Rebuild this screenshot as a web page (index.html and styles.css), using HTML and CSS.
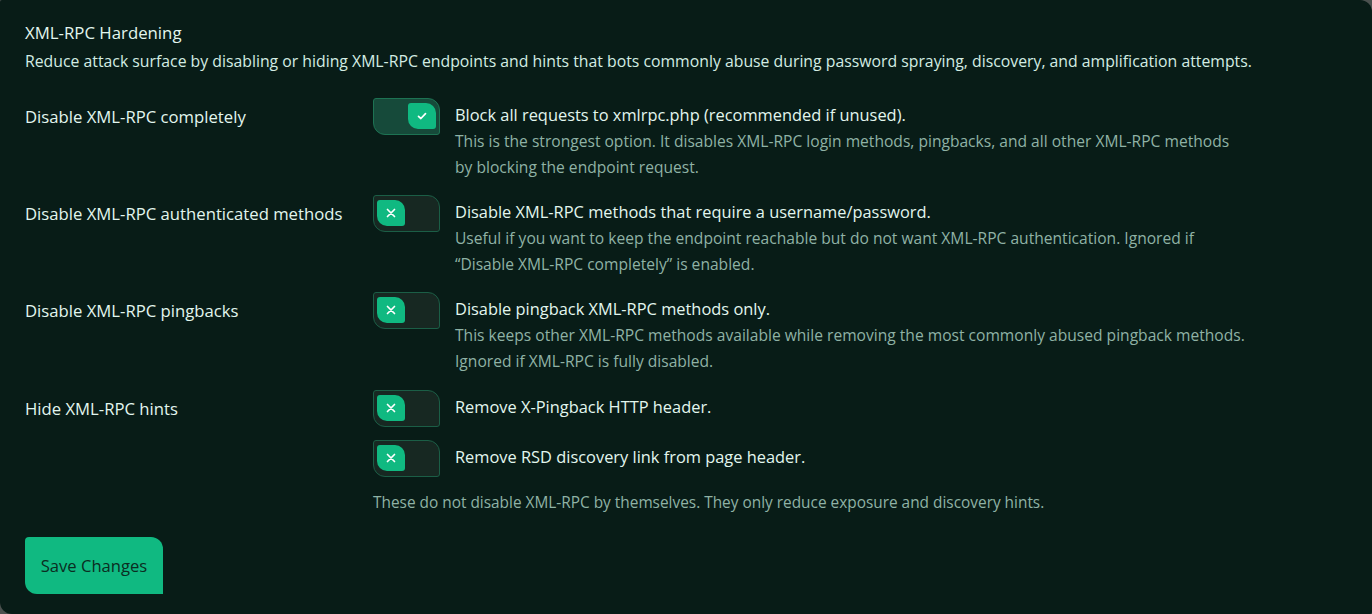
FILE: index.html
```html
<!DOCTYPE html>
<html lang="en">
<head>
<meta charset="utf-8">
<title>XML-RPC Hardening</title>
<link rel="stylesheet" href="styles.css">
</head>
<body>
<main class="panel">
  <header class="section-head">
    <h2 class="section-title">XML-RPC Hardening</h2>
    <p class="section-sub">Reduce attack surface by disabling or hiding XML-RPC endpoints and hints that bots commonly abuse during password spraying, discovery, and amplification attempts.</p>
  </header>

  <div class="rows">
    <div class="row">
      <div class="label">Disable XML-RPC completely</div>
      <div class="control">
        <div class="option">
          <span class="toggle on"><span class="knob"><svg viewBox="0 0 12 12" width="12" height="12"><path d="M2.5 6.3 L4.9 8.5 L9.5 3.6" fill="none" stroke="#fff" stroke-width="1.7" stroke-linecap="round" stroke-linejoin="round"/></svg></span></span>
          <div class="opt-text">
            <div class="opt-title">Block all requests to xmlrpc.php (recommended if unused).</div>
            <div class="opt-desc">This is the strongest option. It disables XML-RPC login methods, pingbacks, and all other XML-RPC methods by blocking the endpoint request.</div>
          </div>
        </div>
      </div>
    </div>

    <div class="row">
      <div class="label">Disable XML-RPC authenticated methods</div>
      <div class="control">
        <div class="option">
          <span class="toggle"><span class="knob"><svg viewBox="0 0 12 12" width="12" height="12"><path d="M2.5 2.5 L9.5 9.5 M9.5 2.5 L2.5 9.5" fill="none" stroke="#fff" stroke-width="1.7" stroke-linecap="round"/></svg></span></span>
          <div class="opt-text">
            <div class="opt-title">Disable XML-RPC methods that require a username/password.</div>
            <div class="opt-desc">Useful if you want to keep the endpoint reachable but do not want XML-RPC authentication. Ignored if “Disable XML-RPC completely” is enabled.</div>
          </div>
        </div>
      </div>
    </div>

    <div class="row">
      <div class="label">Disable XML-RPC pingbacks</div>
      <div class="control">
        <div class="option">
          <span class="toggle"><span class="knob"><svg viewBox="0 0 12 12" width="12" height="12"><path d="M2.5 2.5 L9.5 9.5 M9.5 2.5 L2.5 9.5" fill="none" stroke="#fff" stroke-width="1.7" stroke-linecap="round"/></svg></span></span>
          <div class="opt-text">
            <div class="opt-title">Disable pingback XML-RPC methods only.</div>
            <div class="opt-desc">This keeps other XML-RPC methods available while removing the most commonly abused pingback methods. Ignored if XML-RPC is fully disabled.</div>
          </div>
        </div>
      </div>
    </div>

    <div class="row">
      <div class="label">Hide XML-RPC hints</div>
      <div class="control group">
        <div class="option">
          <span class="toggle"><span class="knob"><svg viewBox="0 0 12 12" width="12" height="12"><path d="M2.5 2.5 L9.5 9.5 M9.5 2.5 L2.5 9.5" fill="none" stroke="#fff" stroke-width="1.7" stroke-linecap="round"/></svg></span></span>
          <div class="opt-text">
            <div class="opt-title">Remove X-Pingback HTTP header.</div>
          </div>
        </div>
        <div class="option">
          <span class="toggle"><span class="knob"><svg viewBox="0 0 12 12" width="12" height="12"><path d="M2.5 2.5 L9.5 9.5 M9.5 2.5 L2.5 9.5" fill="none" stroke="#fff" stroke-width="1.7" stroke-linecap="round"/></svg></span></span>
          <div class="opt-text">
            <div class="opt-title">Remove RSD discovery link from page header.</div>
          </div>
        </div>
        <p class="note">These do not disable XML-RPC by themselves. They only reduce exposure and discovery hints.</p>
      </div>
    </div>
  </div>

  <div class="actions">
    <button class="btn-save" type="button">Save Changes</button>
  </div>
</main>
</body>
</html>
```

FILE: styles.css
```css
html {
  background: #4b514f;
}
body {
  margin: 0;
  font-family: "Open Sans", "Noto Sans", "Liberation Sans", sans-serif;
}
.panel {
  box-sizing: border-box;
  height: 614px;
  background: #081c17;
  border-radius: 2px 12px 2px 12px;
  padding: 20px 25px 0 25px;
  color: #e2f6ee;
}
.section-head {
  margin: 0;
}
.section-title {
  margin: 0;
  font-size: 16.8px;
  font-weight: 400;
  line-height: 26px;
  color: #e2f6ee;
}
.section-sub {
  margin: 2px 0 0 0;
  font-size: 15.8px;
  line-height: 26px;
  color: #d3ece3;
}
.rows {
  display: flex;
  flex-direction: column;
  gap: 15px;
  margin-top: 24px;
}
.row {
  display: flex;
}
.row:last-child {
  margin-top: 1px;
}
.label {
  width: 348px;
  flex: none;
  font-size: 16.7px;
  line-height: 37px;
  color: #e2f6ee;
}
.control {
  display: flex;
  flex-direction: column;
  gap: 13px;
}
.option {
  display: flex;
  gap: 15px;
  align-items: flex-start;
}
.toggle {
  box-sizing: border-box;
  flex: none;
  width: 67px;
  height: 37px;
  border: 1px solid #1b5e46;
  border-radius: 3px 12px 3px 12px;
  background: #172822;
  padding: 4px 3px 5px 3px;
  display: flex;
  justify-content: flex-start;
}
.toggle.on {
  background: #164a3a;
  border-color: #1d7353;
  justify-content: flex-end;
}
.knob {
  width: 28px;
  height: 26px;
  background: #10b981;
  border-radius: 3px 10px 3px 10px;
  display: flex;
  align-items: center;
  justify-content: center;
}
.knob svg {
  display: block;
}
.opt-text {
  padding-top: 4px;
  max-width: 792px;
}
.opt-title {
  font-size: 16.4px;
  line-height: 26px;
  color: #e2f6ee;
}
.opt-desc {
  font-size: 15.6px;
  line-height: 26px;
  color: #8fb2a5;
}
.note {
  margin: 0;
  font-size: 15.4px;
  line-height: 26px;
  color: #8fb2a5;
}
.actions {
  margin-top: 21px;
}
.btn-save {
  width: 138px;
  height: 57px;
  border: none;
  border-radius: 4px 12px 0 12px;
  background: #10b981;
  color: #0b2d22;
  font-family: "Open Sans", "Noto Sans", "Liberation Sans", sans-serif;
  font-size: 16.6px;
  padding: 0;
}
```
